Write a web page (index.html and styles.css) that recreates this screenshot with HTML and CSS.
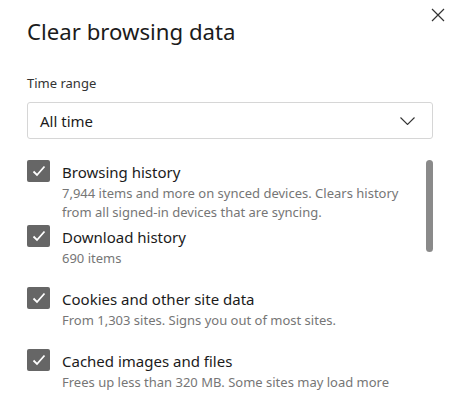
FILE: index.html
```html
<!DOCTYPE html>
<html>
<head>
<meta charset="utf-8">
<link rel="stylesheet" href="styles.css">
</head>
<body>
<div class="dialog">
  <button class="close" aria-label="Close">
    <svg width="14" height="14" viewBox="0 0 14 14"><path d="M1 1 L13 13 M13 1 L1 13" stroke="#333" stroke-width="1.2" fill="none"/></svg>
  </button>
  <h1 class="title">Clear browsing data</h1>
  <div class="label">Time range</div>
  <div class="select">
    <span>All time</span>
    <svg class="chev" width="15" height="8" viewBox="0 0 15 8"><path d="M0.5 0.5 L7.5 7.5 L14.5 0.5" stroke="#333" stroke-width="1.1" fill="none"/></svg>
  </div>
  <div class="list-wrap">
    <div class="list">
      <div class="item first">
        <span class="cb"><svg width="14" height="12" viewBox="0 0 14 12"><path d="M1.5 6.5 L5 10 L12.5 1.5" stroke="#fff" stroke-width="1.8" fill="none"/></svg></span>
        <div class="text">
          <div class="name">Browsing history</div>
          <div class="desc">7,944 items and more on synced devices. Clears history from all signed-in devices that are syncing.</div>
        </div>
      </div>
      <div class="item">
        <span class="cb"><svg width="14" height="12" viewBox="0 0 14 12"><path d="M1.5 6.5 L5 10 L12.5 1.5" stroke="#fff" stroke-width="1.8" fill="none"/></svg></span>
        <div class="text">
          <div class="name">Download history</div>
          <div class="desc">690 items</div>
        </div>
      </div>
      <div class="item">
        <span class="cb"><svg width="14" height="12" viewBox="0 0 14 12"><path d="M1.5 6.5 L5 10 L12.5 1.5" stroke="#fff" stroke-width="1.8" fill="none"/></svg></span>
        <div class="text">
          <div class="name">Cookies and other site data</div>
          <div class="desc">From 1,303 sites. Signs you out of most sites.</div>
        </div>
      </div>
      <div class="item">
        <span class="cb"><svg width="14" height="12" viewBox="0 0 14 12"><path d="M1.5 6.5 L5 10 L12.5 1.5" stroke="#fff" stroke-width="1.8" fill="none"/></svg></span>
        <div class="text">
          <div class="name">Cached images and files</div>
          <div class="desc">Frees up less than 320 MB. Some sites may load more</div>
        </div>
      </div>
    </div>
    <div class="scrollbar"></div>
  </div>
</div>
</body>
</html>
```
FILE: styles.css
```css
html, body {
  margin: 0;
  padding: 0;
  background: #fff;
}
body {
  font-family: "Noto Sans", "Open Sans", sans-serif;
  color: #1b1b1b;
  width: 459px;
  height: 409px;
  overflow: hidden;
}
.dialog {
  position: relative;
  padding: 16px 26px 0 27px;
}
.close {
  position: absolute;
  top: 8px;
  right: 14px;
  border: 0;
  background: none;
  padding: 0;
  width: 14px;
  height: 14px;
}
.title {
  margin: 0;
  font-size: 22.2px;
  font-weight: 400;
  line-height: 32px;
  color: #1b1b1b;
}
.label {
  margin-top: 26px;
  font-size: 13px;
  line-height: 18px;
  color: #333;
}
.select {
  margin-top: 10px;
  height: 35px;
  border: 1px solid #d6d6d6;
  border-radius: 3px;
  display: flex;
  align-items: center;
  justify-content: space-between;
  padding: 0 17px 0 12px;
  font-size: 15px;
}
.chev { display: block; }
.list-wrap {
  display: flex;
  margin-top: 21px;
}
.list {
  flex: 1;
}
.item {
  display: flex;
  gap: 12px;
  margin-bottom: 19px;
}
.item.first { margin-bottom: 3px; }
.cb {
  flex: none;
  width: 23px;
  height: 22px;
  background: #666;
  border-radius: 2px;
  display: flex;
  align-items: center;
  justify-content: center;
}
.name {
  font-size: 15px;
  line-height: 24px;
  color: #1b1b1b;
}
.desc {
  font-size: 13px;
  line-height: 19px;
  color: #767676;
}
.scrollbar {
  flex: none;
  width: 7px;
  height: 92px;
  margin-left: 14px;
  background: #8a8a8a;
  border-radius: 4px;
}
```
